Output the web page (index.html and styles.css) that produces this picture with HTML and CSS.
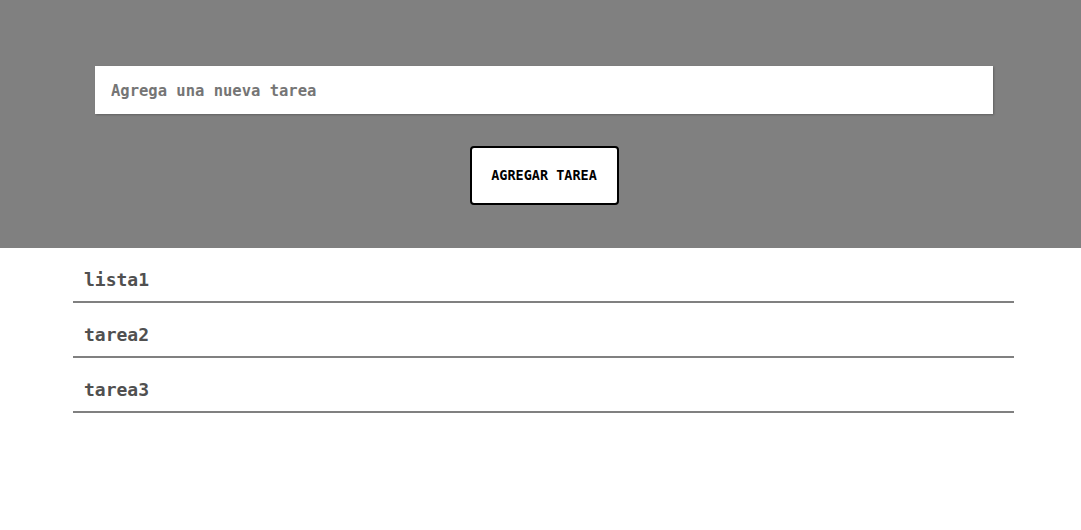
FILE: index.html
```html
<!DOCTYPE html>
<html lang="es">
<head>
<meta charset="utf-8">
<title>Tareas</title>
<link rel="stylesheet" href="styles.css">
</head>
<body>
<header class="header">
  <input class="task-input" type="text" placeholder="Agrega una nueva tarea">
  <button class="add-btn" type="button">AGREGAR TAREA</button>
</header>
<ul class="task-list">
  <li class="task">lista1</li>
  <li class="task">tarea2</li>
  <li class="task">tarea3</li>
</ul>
</body>
</html>
```

FILE: styles.css
```css
html, body {
  margin: 0;
  padding: 0;
  background: #fff;
}

body {
  font-family: "DejaVu Sans Mono", "Liberation Mono", monospace;
}

.header {
  background: #808080;
  height: 248px;
  box-sizing: border-box;
  padding-top: 66px;
  display: flex;
  flex-direction: column;
  align-items: center;
}

.task-input {
  box-sizing: border-box;
  width: 898px;
  height: 48px;
  margin-left: 7px;
  border: none;
  outline: none;
  padding: 2px 16px 0;
  background: #fff;
  font-family: inherit;
  font-size: 15.5px;
  font-weight: bold;
  color: #333;
  box-shadow: 1px 1px 2px rgba(0, 0, 0, 0.25);
}

.task-input::placeholder {
  color: #757575;
}

.add-btn {
  box-sizing: border-box;
  margin-top: 32px;
  margin-left: 7px;
  width: 149px;
  height: 59px;
  padding: 0 0 2px;
  border: 2px solid #000;
  border-radius: 4px;
  background: #fff;
  color: #000;
  font-family: inherit;
  font-size: 13.5px;
  font-weight: bold;
  cursor: pointer;
}

.task-list {
  list-style: none;
  margin: 0 67px 0 73px;
  padding: 0;
}

.task {
  box-sizing: border-box;
  height: 55px;
  padding: 21px 11px 0;
  border-bottom: 2px solid #808080;
  font-size: 18px;
  line-height: 22px;
  font-weight: bold;
  color: #505050;
}
```
